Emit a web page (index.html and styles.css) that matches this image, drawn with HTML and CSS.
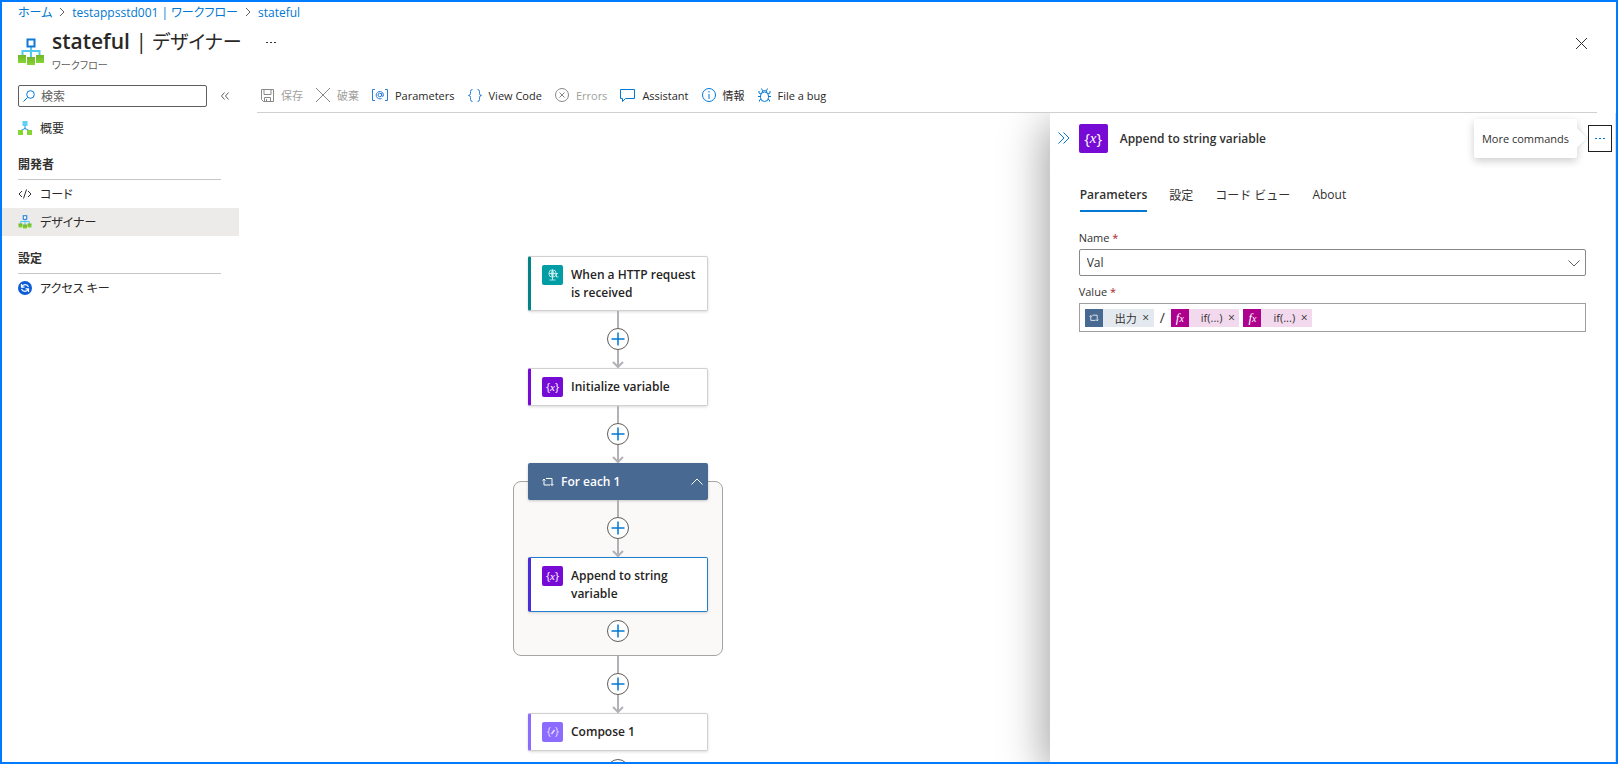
FILE: index.html
```html
<!DOCTYPE html>
<html lang="ja">
<head>
    <meta charset="UTF-8">
    <meta name="viewport" content="width=device-width, initial-scale=1.0">
    <title>stateful | デザイナー</title>
    <link rel="stylesheet" href="styles.css">
</head>
<body>
<!-- shared icons -->
<svg class="defs" aria-hidden="true">
    <defs>
        <linearGradient id="green" x1="0" y1="0" x2="0" y2="1">
            <stop offset="0" stop-color="#6fb52c"/>
            <stop offset="1" stop-color="#86d633"/>
        </linearGradient>
    </defs>
    <symbol id="logic-app" viewBox="0 0 26 28">
        <path d="M13 9v11M4.500 18v-5h17v5" fill="none" stroke="#50c8f0" stroke-width="2"/>
        <rect x="9.500" y="1.500" width="7" height="7" fill="#fff" stroke="#0f78d4" stroke-width="2"/>
        <rect x="0" y="17" width="8" height="8" fill="url(#green)"/>
        <rect x="9" y="19" width="8" height="8" fill="url(#green)"/>
        <rect x="18" y="17" width="8" height="8" fill="url(#green)"/>
    </symbol>
    <symbol id="arrow" viewBox="0 0 12 18">
        <path d="M6 0v17M1 12l5 5 5-5" fill="none" stroke="#b1b1b7" stroke-width="2"/>
    </symbol>
    <symbol id="plus" viewBox="0 0 14 14">
        <path d="M7 .5v13M.5 7h13" fill="none" stroke="#0078d4" stroke-width="1.500"/>
    </symbol>
    <symbol id="loop" viewBox="0 0 12 10">
        <path d="M2 2v6h6M.5 3.500L2 2l1.500 1.500M4 1.500h6v7M8.500 7L10 8.500 11.500 7" fill="none" stroke="currentColor"/>
    </symbol>
</svg>

<div class="portal">
    <header>
        <nav class="breadcrumb" aria-label="階層リンク">
            <a href="#">ホーム</a>
            <svg width="6" height="10" viewBox="0 0 6 10"><path d="M1 1l4 4-4 4" fill="none" stroke="#605e5c"/></svg>
            <a href="#">testappsstd001 | ワークフロー</a>
            <svg width="6" height="10" viewBox="0 0 6 10"><path d="M1 1l4 4-4 4" fill="none" stroke="#605e5c"/></svg>
            <a href="#">stateful</a>
        </nav>
        <div class="title-row">
            <svg class="title-icon" width="26" height="28"><use href="#logic-app"/></svg>
            <div class="titles">
                <h1>stateful <span class="bar">|</span> <span class="sub">デザイナー</span></h1>
                <p>ワークフロー</p>
            </div>
            <button class="icon-btn title-more" aria-label="その他">
                <svg width="11" height="2" viewBox="0 0 11 2" fill="#323130"><path d="M0 0h2v1H0zM4 0h2v1H4zM8 0h2v1H8z"/></svg>
            </button>
            <button class="icon-btn close" aria-label="閉じる">
                <svg width="11" height="11" viewBox="0 0 11 11"><path d="M0 0l11 11M11 0L0 11" stroke="#323130"/></svg>
            </button>
        </div>
    </header>

    <div class="body">
        <aside>
            <div class="search-row">
                <div class="search">
                    <svg width="12" height="12" viewBox="0 0 12 12"><path d="M4.500 7.500L.5 11.500" stroke="#0078d4"/><circle cx="7.500" cy="4.500" r="3.800" fill="none" stroke="#0078d4"/></svg>
                    <input type="text" placeholder="検索" aria-label="検索">
                </div>
                <button class="icon-btn" aria-label="折りたたむ">
                    <svg width="8" height="8" viewBox="0 0 8 8"><path d="M3.500.5L.5 4l3 3.500M7.500.5l-3 3.500 3 3.500" fill="none" stroke="#605e5c"/></svg>
                </button>
            </div>
            <nav class="menu" aria-label="メニュー">
                <a href="#">
                    <svg width="14" height="14" viewBox="0 0 14 14"><path d="M7 5v3M3 9.500L7 7.500l4 2" fill="none" stroke="#1f8fd6"/><rect x="4.500" y="0" width="5" height="5" fill="#5fd0f5"/><rect x="0" y="9" width="5" height="5" fill="#86d633"/><rect x="9" y="9" width="5" height="5" fill="#86d633"/></svg>
                    概要
                </a>
                <h2>開発者</h2>
                <a href="#">
                    <svg width="14" height="10" viewBox="0 0 14 10"><path d="M4 2L1 5l3 3M10 2l3 3-3 3M8.500.5l-3 9" fill="none" stroke="#323130"/></svg>
                    コード
                </a>
                <a href="#" class="selected">
                    <svg width="14" height="14"><use href="#logic-app"/></svg>
                    デザイナー
                </a>
                <h2>設定</h2>
                <a href="#">
                    <svg width="14" height="14" viewBox="0 0 14 14"><circle cx="7" cy="7" r="7" fill="#0b5cd6"/><path d="M3.500 3v3.200h3M3.800 6A3.600 3.600 0 0 1 10.500 6M10.500 11V7.800h-3M10.200 8A3.600 3.600 0 0 1 3.500 8" fill="none" stroke="#fff" stroke-width="1.200"/></svg>
                    アクセス キー
                </a>
            </nav>
        </aside>

        <main>
            <div class="toolbar">
                <button disabled>
                    <svg width="13" height="13" viewBox="0 0 13 13"><path d="M.5.5h12v12h-10l-2-2zM3 .5v5h7v-5M3.500 12.500v-4h6v4M5.500 10v2" fill="none" stroke="#8a8886"/></svg>
                    保存
                </button>
                <button disabled>
                    <svg width="14" height="14" viewBox="0 0 14 14"><path d="M0 0l14 14M14 0L0 14" stroke="#8a8886"/></svg>
                    破棄
                </button>
                <button>
                    <svg width="16" height="12" viewBox="0 0 16 12" fill="none" stroke="#2b7cd3"><path d="M3 .5H.5v11H3M13 .5h2.500v11H13"/><circle cx="7.800" cy="6" r="1.800"/><path d="M9.700 4v3q1.800 1.500 1.800-1.500a3.700 3.700 0 1 0-2 4"/></svg>
                    Parameters
                </button>
                <button>
                    <svg width="14" height="13" viewBox="0 0 14 13"><path d="M4.500.5Q2.500.5 2.500 2.500v2q0 2-2 2 2 0 2 2v2q0 2 2 2M9.500.5q2 0 2 2v2q0 2 2 2-2 0-2 2v2q0 2-2 2" fill="none" stroke="#2b7cd3"/></svg>
                    View Code
                </button>
                <button disabled>
                    <svg width="14" height="14" viewBox="0 0 14 14"><circle cx="7" cy="7" r="6.500" fill="none" stroke="#8a8886"/><path d="M4.500 4.500l5 5M9.500 4.500l-5 5" stroke="#8a8886"/></svg>
                    Errors
                </button>
                <button>
                    <svg width="15" height="13" viewBox="0 0 15 13"><path d="M.5.5h14v9h-9l-3 3v-3h-2z" fill="none" stroke="#0078d4"/></svg>
                    Assistant
                </button>
                <button>
                    <svg width="14" height="14" viewBox="0 0 14 14"><circle cx="7" cy="7" r="6.500" fill="none" stroke="#0078d4"/><path d="M7 3v1.500M7 6v5" stroke="#0078d4"/></svg>
                    情報
                </button>
                <button>
                    <svg width="13" height="14" viewBox="0 0 13 14" fill="none" stroke="#0078d4"><path d="M2.500 8a4 4 0 0 1 8 0v1.500a4 4 0 0 1-8 0zM4 4.500Q4 2.500 6.500 2.500T9 4.500M4.500 2.800L3.500.5M8.500 2.800l1-2.300M3 6L1 5V3M10 6l2-1V3M2.500 8.500H0M10.500 8.500H13M3 11l-1.500 1v1.500M10 11l1.500 1v1.500"/></svg>
                    File a bug
                </button>
            </div>

            <div class="workspace">
                <div class="canvas">
                    <div class="flow">
                        <div class="node http">
                            <span class="badge"><svg width="12" height="12" viewBox="0 0 12 12" fill="none" stroke="#d9f5f5" stroke-width=".8"><circle cx="5.500" cy="4.500" r="3.700"/><path d="M2 4.500h9M5.500 1v10M2.500 11h6M5.500.800Q2.500 4.500 5.500 8.200 8.500 4.500 5.500.800M9.500 5v3h2"/></svg></span>
                            <span>When a HTTP request is received</span>
                        </div>
                        <div class="connector">
                            <span class="line"></span>
                            <button class="add" aria-label="アクションの追加"><svg width="14" height="14"><use href="#plus"/></svg></button>
                            <svg width="12" height="18"><use href="#arrow"/></svg>
                        </div>
                        <div class="node variable">
                            <span class="badge">{<i>x</i>}</span>
                            <span>Initialize variable</span>
                        </div>
                        <div class="connector">
                            <span class="line"></span>
                            <button class="add" aria-label="アクションの追加"><svg width="14" height="14"><use href="#plus"/></svg></button>
                            <svg width="12" height="18"><use href="#arrow"/></svg>
                        </div>
                        <section class="group">
                            <div class="group-head">
                                <svg width="12" height="10"><use href="#loop"/></svg>
                                <span>For each 1</span>
                                <button class="icon-btn" aria-label="折りたたむ">
                                    <svg width="12" height="7" viewBox="0 0 12 7"><path d="M.5 6.500L6 1l5.500 5.500" fill="none" stroke="#fff"/></svg>
                                </button>
                            </div>
                            <div class="connector">
                                <span class="line"></span>
                                <button class="add" aria-label="アクションの追加"><svg width="14" height="14"><use href="#plus"/></svg></button>
                                <svg width="12" height="18"><use href="#arrow"/></svg>
                            </div>
                            <div class="node variable active">
                                <span class="badge">{<i>x</i>}</span>
                                <span>Append to string variable</span>
                            </div>
                            <button class="add last" aria-label="アクションの追加"><svg width="14" height="14"><use href="#plus"/></svg></button>
                        </section>
                        <div class="connector">
                            <span class="line"></span>
                            <button class="add" aria-label="アクションの追加"><svg width="14" height="14"><use href="#plus"/></svg></button>
                            <svg width="12" height="18"><use href="#arrow"/></svg>
                        </div>
                        <div class="node compose">
                            <span class="badge"><svg width="12" height="10" viewBox="0 0 12 10" fill="none" stroke="#e6deff"><path d="M3.500.5Q2 .5 2 2v1.500Q2 5 .5 5 2 5 2 6.500V8q0 1.500 1.500 1.500M8.500.5Q10 .5 10 2v1.500Q10 5 11.500 5 10 5 10 6.500V8q0 1.500-1.500 1.500"/><path d="M4.500 7l3-4" stroke-width="1.500"/></svg></span>
                            <span>Compose 1</span>
                        </div>
                        <div class="connector tail">
                            <button class="add" aria-label="アクションの追加"><svg width="14" height="14"><use href="#plus"/></svg></button>
                        </div>
                    </div>
                </div>

                <section class="panel">
                    <div class="panel-head">
                        <button class="icon-btn" aria-label="パネルを閉じる">
                            <svg width="12" height="12" viewBox="0 0 12 12"><path d="M.5.5L6 6 .5 11.500M5.500.5L11 6l-5.500 5.500" fill="none" stroke="#0078d4"/></svg>
                        </button>
                        <span class="badge">{<i>x</i>}</span>
                        <h2>Append to string variable</h2>
                        <div class="more">
                            <button class="more-btn" aria-describedby="more-tip" aria-label="More commands">
                                <svg width="11" height="1" viewBox="0 0 11 1" fill="#0078d4"><path d="M0 0h2v1H0zM4 0h2v1H4zM8 0h2v1H8z"/></svg>
                            </button>
                            <div class="tooltip" id="more-tip" role="tooltip">More commands</div>
                        </div>
                    </div>
                    <div class="tabs" role="tablist">
                        <button role="tab" aria-selected="true">Parameters</button>
                        <button role="tab" aria-selected="false">設定</button>
                        <button role="tab" aria-selected="false">コード ビュー</button>
                        <button role="tab" aria-selected="false">About</button>
                    </div>
                    <form>
                        <label for="varName">Name <span class="req">*</span></label>
                        <div class="select">
                            <select id="varName" name="varName">
                                <option>Val</option>
                            </select>
                            <svg width="12" height="7" viewBox="0 0 12 7"><path d="M.5.5L6 6 11.500.5" fill="none" stroke="#605e5c"/></svg>
                        </div>
                        <label id="valueLabel">Value <span class="req">*</span></label>
                        <div class="value-box" role="textbox" contenteditable="true" spellcheck="false" aria-labelledby="valueLabel">
                            <span class="token output" contenteditable="false">
                                <span class="token-icon"><svg width="10" height="8"><use href="#loop"/></svg></span>
                                出力
                                <button type="button" aria-label="削除">×</button>
                            </span>
                            <span class="slash">/</span>
                            <span class="token fx" contenteditable="false">
                                <span class="token-icon"><i>f<small>x</small></i></span>
                                if(...)
                                <button type="button" aria-label="削除">×</button>
                            </span>
                            <span class="token fx" contenteditable="false">
                                <span class="token-icon"><i>f<small>x</small></i></span>
                                if(...)
                                <button type="button" aria-label="削除">×</button>
                            </span>
                        </div>
                    </form>
                </section>
            </div>
        </main>
    </div>
</div>
</body>
</html>
```
FILE: styles.css
```css
* {
    box-sizing: border-box;
}

html, body {
    margin: 0;
    height: 100%;
}

body, button, input, select {
    font-family: "Open Sans", "Noto Sans CJK JP", sans-serif;
    font-size: 12px;
    color: #323130;
    font-feature-settings: "palt";
}

h1, h2, p {
    margin: 0;
}

a {
    text-decoration: none;
    color: inherit;
}

button {
    border: none;
    padding: 0;
    background: none;
    cursor: pointer;
}

svg {
    flex: none;
    display: block;
}

.defs {
    position: absolute;
    width: 0;
    height: 0;
}

.portal {
    display: flex;
    flex-direction: column;
    height: 100vh;
    border: 2px solid #007bff;
    background-color: #fff;
    overflow: hidden;
}

.icon-btn {
    display: flex;
    align-items: center;
    justify-content: center;
}

/* header */
header {
    padding: 0 16px;
}

.breadcrumb {
    display: flex;
    align-items: center;
    gap: 7px;
    height: 20px;
    font-size: 12px;
    color: #0078d4;
}

.title-row {
    display: flex;
    height: 56px;
}

.title-icon {
    margin-top: 16px;
}

.titles {
    margin-left: 8px;
}

h1 {
    font-size: 21px;
    line-height: 38px;
    font-weight: 600;
    color: #292827;
}

h1 .bar, h1 .sub {
    font-weight: 400;
}

h1 .sub {
    font-size: 19px;
}

.titles p {
    font-size: 10px;
    line-height: 8px;
    color: #605e5c;
}

.title-more {
    width: 20px;
    height: 42px;
    margin-left: 20px;
}

.close {
    width: 24px;
    height: 42px;
    margin-left: auto;
    margin-right: 7px;
}

/* sidebar */
.body {
    display: flex;
    flex: 1;
    min-height: 0;
}

aside {
    width: 237px;
    flex: none;
    padding-top: 7px;
}

.search-row {
    display: flex;
    gap: 14px;
    padding-left: 16px;
}

.search {
    display: flex;
    align-items: center;
    gap: 6px;
    width: 189px;
    height: 22px;
    padding: 0 4px;
    border: 1px solid #605e5c;
    border-radius: 2px;
}

.search input {
    flex: 1;
    min-width: 0;
    padding: 0;
    border: none;
    outline: none;
}

.search input::placeholder {
    color: #605e5c;
}

.menu {
    padding-top: 7px;
}

.menu a {
    display: flex;
    align-items: center;
    gap: 8px;
    height: 28px;
    padding-left: 16px;
    color: #292827;
}

.menu .selected {
    background-color: #edebe9;
}

.menu h2 {
    height: 38px;
    margin: 0 18px 0 16px;
    padding-top: 14px;
    border-bottom: 1px solid #c8c6c4;
    font-size: 12px;
    line-height: 18px;
    font-weight: 600;
}

/* toolbar */
main {
    display: flex;
    flex-direction: column;
    flex: 1;
    min-width: 0;
    padding-left: 18px;
}

.toolbar {
    display: flex;
    align-items: center;
    gap: 13px;
    height: 35px;
    flex: none;
    margin-right: 19px;
    padding: 0 4px;
    border-bottom: 1px solid #d2d0ce;
}

.toolbar button {
    display: flex;
    align-items: center;
    gap: 7px;
    font-size: 11px;
    color: #292827;
}

.toolbar button:disabled {
    color: #a19f9d;
    cursor: default;
}

/* designer */
.workspace {
    display: flex;
    flex: 1;
    min-height: 0;
}

.canvas {
    flex: 1;
    min-width: 0;
    overflow: hidden;
    padding: 143px 0 0 256px;
}

.flow {
    display: flex;
    flex-direction: column;
    align-items: center;
    width: 210px;
}

.node {
    display: flex;
    gap: 8px;
    width: 180px;
    padding: 8px 8px 8px 11px;
    border: 1px solid #d2d0ce;
    border-left: 3px solid #770bd6;
    border-radius: 2px;
    background-color: #fff;
    box-shadow: 0 1px 3px rgba(0, 0, 0, 0.15);
    font-size: 12px;
    line-height: 18px;
    font-weight: 600;
    color: #252423;
}

.node > span:last-child {
    padding-top: 1px;
}

.node.http {
    border-left-color: #038387;
}

.node.compose {
    border-left-color: #8c6cff;
}

.node.active {
    border-color: #1f7fd0;
    border-left-color: #4a2cd8;
}

.badge {
    display: flex;
    align-items: center;
    justify-content: center;
    flex: none;
    width: 21px;
    height: 20px;
    border-radius: 2px;
    background-color: #770bd6;
    color: #fff;
    font-size: 11px;
    font-weight: 400;
}

.badge i {
    font-family: "Liberation Serif", serif;
}

.http .badge {
    background-color: #009da5;
}

.compose .badge {
    background-color: #8c6cff;
}

.connector {
    display: flex;
    flex-direction: column;
    align-items: center;
}

.line {
    width: 2px;
    height: 17px;
    background-color: #b1b1b7;
}

.add {
    display: flex;
    align-items: center;
    justify-content: center;
    width: 22px;
    height: 22px;
    border: 1px solid #605e5c;
    border-radius: 50%;
    background-color: #fff;
}

.tail {
    padding-top: 8px;
}

.group {
    display: flex;
    flex-direction: column;
    align-items: center;
    position: relative;
    width: 100%;
    padding-bottom: 14px;
}

/* frame starts at the middle of the group header */
.group::before {
    content: "";
    position: absolute;
    inset: 18px 0 0;
    border: 1px solid #a6a4a2;
    border-radius: 8px;
    background-color: #faf9f8;
}

.group > * {
    position: relative;
}

.group-head {
    display: flex;
    align-items: center;
    gap: 7px;
    width: 180px;
    height: 37px;
    padding: 0 5px 0 14px;
    border-radius: 2px;
    background-color: #486991;
    box-shadow: 0 1px 3px rgba(0, 0, 0, 0.2);
    color: #fff;
    font-size: 12px;
    font-weight: 600;
}

.group-head .icon-btn {
    margin-left: auto;
}

.add.last {
    margin-top: 8px;
}

/* details panel */
.panel {
    width: 35vw;
    flex: none;
    padding: 10px 3px 0 8px;
    border-right: 1px solid #e1dfdd;
    background-color: #fff;
    box-shadow: -6px 10px 40px rgba(0, 0, 0, 0.35);
    clip-path: inset(0 0 0 -60px);
}

.panel-head {
    display: flex;
    align-items: center;
    height: 30px;
}

.panel-head .icon-btn {
    width: 12px;
    margin-right: 9px;
}

.panel-head .badge {
    width: 29px;
    height: 29px;
    font-size: 15px;
}

.panel h2 {
    margin-left: 12px;
    font-size: 12px;
    font-weight: 600;
}

.more {
    position: relative;
    margin-left: auto;
}

.more-btn {
    display: flex;
    align-items: center;
    justify-content: center;
    width: 24px;
    height: 27px;
    border: 1px solid #201f1e;
}

.tooltip {
    position: absolute;
    top: -6px;
    right: 35px;
    padding: 10px 8px;
    border-radius: 2px;
    background-color: #fff;
    box-shadow: 0 3px 8px rgba(0, 0, 0, 0.2);
    font-size: 11px;
    line-height: 19px;
    white-space: nowrap;
}

.tooltip::after {
    content: "";
    position: absolute;
    top: 12px;
    right: -7px;
    width: 14px;
    height: 14px;
    background-color: #fff;
    box-shadow: 1px -1px 2px rgba(0, 0, 0, 0.08);
    transform: rotate(45deg);
}

.tabs {
    display: flex;
    gap: 22px;
    margin: 26px 0 0 22px;
}

.tabs button {
    height: 33px;
    border-bottom: 2px solid transparent;
    font-feature-settings: normal;
}

.tabs button[aria-selected="true"] {
    border-bottom-color: #0078d4;
    font-weight: 600;
}

form {
    margin: 18px 26px 0 21px;
}

label {
    display: block;
    font-size: 11px;
    line-height: 16px;
    margin-bottom: 3px;
}

.req {
    color: #a4262c;
}

.select {
    position: relative;
    margin-bottom: 8px;
}

.select select {
    appearance: none;
    display: block;
    width: 100%;
    height: 27px;
    padding: 0 7px;
    border: 1px solid #8a8886;
    border-radius: 2px;
    background-color: #fff;
}

.select svg {
    position: absolute;
    right: 6px;
    top: 11px;
    pointer-events: none;
}

.value-box {
    display: flex;
    align-items: center;
    gap: 4px;
    height: 29px;
    padding: 0 5px;
    border: 1px solid #a19f9d;
}

.token {
    display: flex;
    align-items: center;
    height: 18px;
    padding-right: 4px;
    font-size: 11px;
}

.token button {
    width: 8px;
    margin-left: 5px;
    font-size: 12px;
    line-height: 16px;
}

.token-icon {
    display: flex;
    align-items: center;
    justify-content: center;
    width: 18px;
    height: 18px;
    margin-right: 12px;
    color: #fff;
}

.token-icon i {
    font: italic 13px "Liberation Serif", serif;
}

.token-icon small {
    font-size: 10px;
}

.slash {
    padding: 0 2px;
    font-size: 14px;
}

.output {
    background-color: #e4e9ef;
}

.output .token-icon {
    background-color: #486991;
}

.fx {
    background-color: #f2d9ee;
}

.fx .token-icon {
    background-color: #ad008c;
}
```
